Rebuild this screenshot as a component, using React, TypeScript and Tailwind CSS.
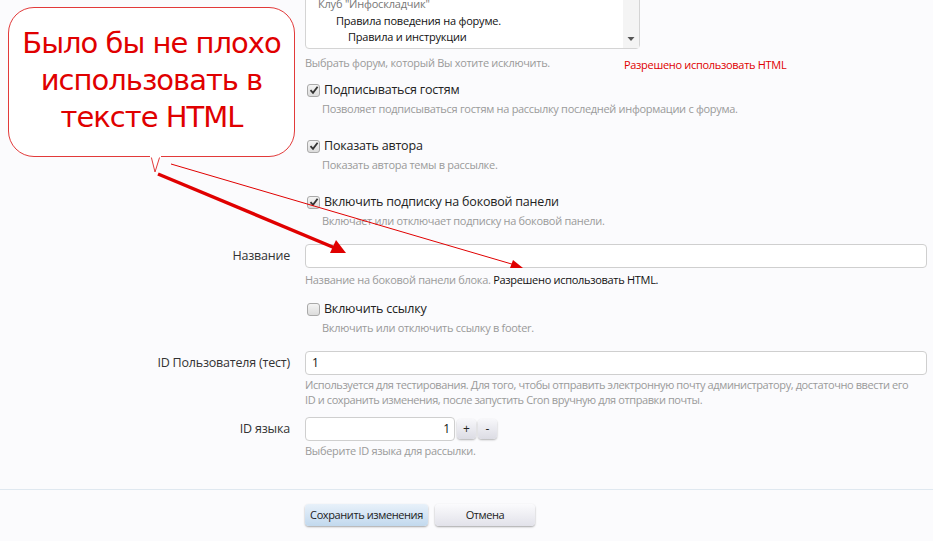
import React from "react";

const font = { fontFamily: '"Open Sans", "Noto Sans", sans-serif' };

function Check({ checked }: { checked?: boolean }) {
  return (
    <span className="flex h-[13px] w-[13px] shrink-0 items-center justify-center rounded-[3px] border border-[#a9a9a9] bg-gradient-to-b from-[#f4f4f4] to-[#dcdcdc]">
      {checked && (
        <svg width="10" height="10" viewBox="0 0 10 10">
          <path d="M1.5 5.2 L4 7.8 L8.6 1.8" fill="none" stroke="#333" strokeWidth="1.8" />
        </svg>
      )}
    </span>
  );
}

function CheckRow({ label, hint, checked }: { label: string; hint: string; checked?: boolean }) {
  return (
    <div className="grid grid-cols-[290px_1fr] gap-x-[15px] pr-[6px]">
      <div />
      <div>
        <div className="flex items-center gap-[4px] pl-[2px]">
          <Check checked={checked} />
          <span className="text-[12.5px] leading-[16px] tracking-[-0.2px] text-[#222]">{label}</span>
        </div>
        <div className="pl-[17px] pt-[3px] text-[11px] leading-[15px] tracking-[-0.3px] text-[#9a9a9a]">{hint}</div>
      </div>
    </div>
  );
}

export default function App() {
  return (
    <div className="relative h-[541px] w-full overflow-hidden bg-[#fbfbfd]" style={font}>
      {/* forum select */}
      <div className="grid grid-cols-[290px_1fr] gap-x-[15px] pr-[6px]">
        <div />
        <div>
          <div className="-mt-[14px] flex h-[63px] w-[335px] rounded-b-[4px] border border-[#d4d4d4] bg-white">
            <div className="flex-1 pl-[12px] pt-[9px] text-[11px] leading-[16.5px] tracking-[-0.2px]">
              <div className="text-[#777]">Клуб "Инфоскладчик"</div>
              <div className="pl-[18px] text-[#111]">Правила поведения на форуме.</div>
              <div className="pl-[30px] text-[#111]">Правила и инструкции</div>
            </div>
            <div className="flex w-[16px] flex-col justify-end bg-[#f4f4f4] pb-[6px]">
              <svg width="16" height="6" viewBox="0 0 16 6">
                <path d="M4.5 1 L11.5 1 L8 5 Z" fill="#555" />
              </svg>
            </div>
          </div>
          <div className="flex items-start pt-[6px] text-[11px] leading-[15px] tracking-[-0.3px]">
            <span className="text-[#9a9a9a]">Выбрать форум, который Вы хотите исключить.</span>
            <span className="ml-[74px] pt-[2px] text-[#e00000]">Разрешено использовать HTML</span>
          </div>
        </div>
      </div>

      <div className="mt-[10px] flex flex-col gap-[22px]">
        <CheckRow checked label="Подписываться гостям" hint="Позволяет подписываться гостям на рассылку последней информации с форума." />
        <CheckRow checked label="Показать автора" hint="Показать автора темы в рассылке." />
        <CheckRow checked label="Включить подписку на боковой панели" hint="Включает или отключает подписку на боковой панели." />
      </div>

      {/* title */}
      <div className="mt-[16px] grid grid-cols-[290px_1fr] gap-x-[15px] pr-[6px]">
        <div className="pt-[4px] text-right text-[12.5px] leading-[16px] tracking-[-0.2px] text-[#333]">Название</div>
        <div>
          <div className="h-[24px] rounded-[4px] border border-[#cfcfcf] bg-white" />
          <div className="pt-[4px] text-[11px] leading-[15px] tracking-[-0.3px]">
            <span className="text-[#9a9a9a]">Название на боковой панели блока. </span>
            <span className="text-[#111]">Разрешено использовать HTML.</span>
          </div>
        </div>
      </div>

      <div className="mt-[14px]">
        <CheckRow label="Включить ссылку" hint="Включить или отключить ссылку в footer." />
      </div>

      {/* user id */}
      <div className="mt-[16px] grid grid-cols-[290px_1fr] gap-x-[15px] pr-[6px]">
        <div className="pt-[4px] text-right text-[12.5px] leading-[16px] tracking-[-0.2px] text-[#333]">ID Пользователя (тест)</div>
        <div>
          <div className="flex h-[24px] items-center rounded-[4px] border border-[#cfcfcf] bg-white pl-[6px] text-[12px] text-[#111]">
            1
          </div>
          <div className="pr-[16px] pt-[2px] text-[11px] leading-[15px] tracking-[-0.4px] text-[#9a9a9a]">
            Используется для тестирования. Для того, чтобы отправить электронную почту администратору, достаточно ввести его ID и сохранить изменения, после запустить Cron вручную для отправки почты.
          </div>
        </div>
      </div>

      {/* language id */}
      <div className="mt-[10px] grid grid-cols-[290px_1fr] gap-x-[15px] pr-[6px]">
        <div className="pt-[4px] text-right text-[12.5px] leading-[16px] tracking-[-0.2px] text-[#333]">ID языка</div>
        <div>
          <div className="flex items-center gap-[2px]">
            <div className="flex h-[24px] w-[150px] items-center justify-end rounded-[4px] border border-[#cfcfcf] bg-white pr-[4px] text-[12px] text-[#111]">
              1
            </div>
            <button className="flex h-[20px] w-[19px] items-center justify-center rounded-[4px] bg-gradient-to-b from-[#f7f7fa] to-[#dcdce4] text-[12px] leading-none text-[#222] shadow-[0_1px_2px_rgba(0,0,0,0.3)]">
              +
            </button>
            <button className="flex h-[20px] w-[19px] items-center justify-center rounded-[4px] bg-gradient-to-b from-[#f7f7fa] to-[#dcdce4] text-[12px] leading-none text-[#222] shadow-[0_1px_2px_rgba(0,0,0,0.3)]">
              -
            </button>
          </div>
          <div className="pt-[2px] text-[11px] leading-[15px] tracking-[-0.3px] text-[#9a9a9a]">Выберите ID языка для рассылки.</div>
        </div>
      </div>

      <div className="mt-[31px] h-px bg-[#dfe8f0]" />

      <div className="mt-[14px] grid grid-cols-[290px_1fr] gap-x-[15px]">
        <div />
        <div className="flex gap-[7px]">
          <button className="h-[22px] w-[123px] rounded-[4px] bg-gradient-to-b from-[#e8f1fa] to-[#c2d9ee] text-[11px] tracking-[-0.4px] text-[#222] shadow-[0_1px_2px_rgba(0,0,0,0.35)]">
            Сохранить изменения
          </button>
          <button className="h-[22px] w-[100px] rounded-[4px] bg-gradient-to-b from-[#fbfbfd] to-[#e2e2ea] text-[11px] tracking-[-0.4px] text-[#222] shadow-[0_1px_2px_rgba(0,0,0,0.35)]">
            Отмена
          </button>
        </div>
      </div>

      {/* callout annotation */}
      <div className="absolute left-[8px] top-[7px] flex h-[150px] w-[287px] flex-col items-center justify-center rounded-[26px] border border-[#e23a3a] bg-white text-[29px] leading-[37px] text-[#e00000]" style={{ fontFamily: '"DejaVu Sans", sans-serif' }}>
        <div className="-mt-[4px] tracking-[-1px]">Было бы не плохо</div>
        <div className="tracking-[-1px]">использовать в</div>
        <div className="tracking-[-1px]">тексте HTML</div>
      </div>
      <svg className="pointer-events-none absolute left-0 top-0" width="933" height="541">
        <path d="M151 156 L155 172 L160 156" fill="white" stroke="#e23a3a" strokeWidth="1" />
        <line x1="150" y1="156.5" x2="161" y2="156.5" stroke="white" strokeWidth="2" />
        <line x1="158" y1="174" x2="335" y2="248" stroke="#e00000" strokeWidth="3.5" />
        <path d="M346 253 L330 253 L336 240 Z" fill="#e00000" />
        <line x1="171" y1="164" x2="515" y2="265" stroke="#e00000" strokeWidth="1" />
        <path d="M523 268 L510 268 L513 260 Z" fill="#e00000" />
      </svg>
    </div>
  );
}
